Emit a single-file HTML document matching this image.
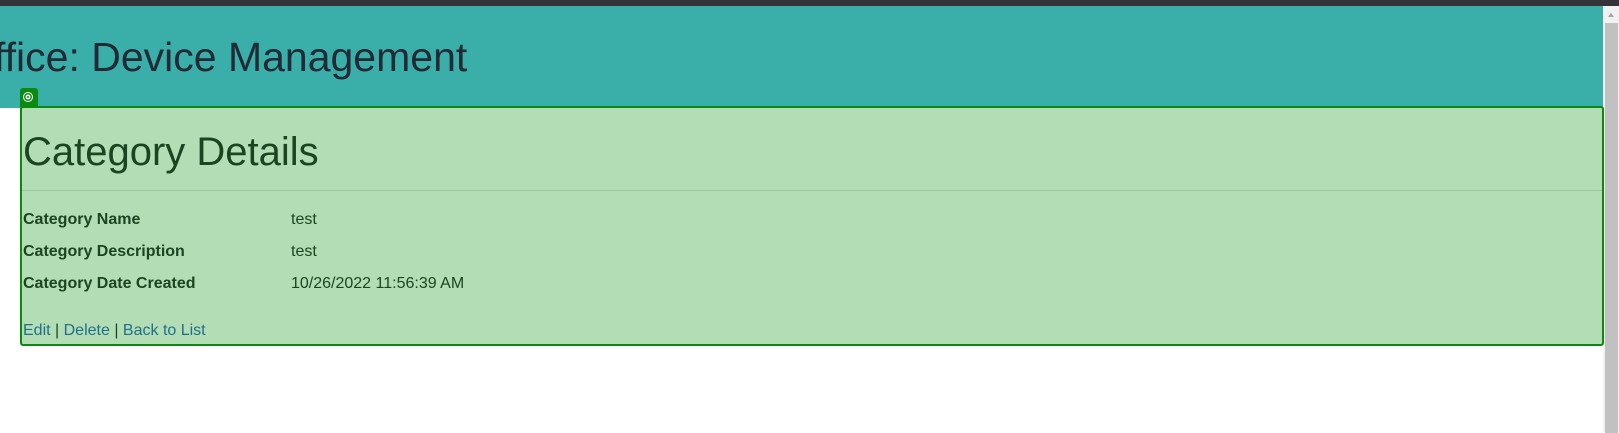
<!DOCTYPE html>
<html><head><style>
body{margin:0;width:1619px;height:432px;overflow:hidden;background:#fff;font-family:"Liberation Sans",sans-serif;position:relative}
.top{position:absolute;left:0;top:0;width:1619px;height:6px;background:#333439}
.hdr{position:absolute;left:0;top:6px;width:1603px;height:102px;background:#3aafa9}
.hdr h1{position:absolute;left:-6px;top:28px;margin:0;font-weight:normal;font-size:41px;color:#212a35;white-space:nowrap}
.box{position:absolute;left:20px;top:106px;width:1580px;height:236px;background:#b3ddb5;border:2px solid #0a8a0f;border-radius:3px}
.ic{position:absolute;left:20px;top:88px;width:18px;height:19px;background:#0a8a0f;border-radius:3px 3px 0 0}
.ic:after{content:"";position:absolute;left:3px;top:4px;width:8px;height:8px;border:1.5px solid #fff;border-radius:50%;box-shadow:inset 0 0 0 1.5px #0a8a0f,inset 0 0 0 3px #fff,inset 0 0 0 4px #0a8a0f}
h2{position:absolute;left:1px;top:22px;margin:0;font-weight:normal;font-size:40px;color:#1c4421}
.hr{position:absolute;left:0;right:0;top:82px;height:1px;background:#9ec7a0}
.r{position:absolute;left:1px;font-size:16px;color:#1c4421;white-space:nowrap}
.r b{display:inline-block;width:268px}
.lk{position:absolute;left:1px;top:214px;font-size:16px;color:#1c4421}
.lk span{color:#1f6f8b}
.sb{position:absolute;left:1603px;top:6px;width:16px;height:426px;background:#f1f1f1}
.sb div{position:absolute;left:2px;top:17px;width:13px;height:410px;background:#c1c1c1}
.sb i{position:absolute;left:5px;top:7px;border:3px solid transparent;border-bottom:4px solid #a3a3a3;border-top:0}
</style></head><body>
<div class="top"></div>
<div class="hdr"><h1>ffice: Device Management</h1></div>
<div class="sb"><i></i><div></div></div>
<div class="box">
<h2>Category Details</h2>
<div class="hr"></div>
<div class="r" style="top:103px"><b>Category Name</b>test</div>
<div class="r" style="top:135px"><b>Category Description</b>test</div>
<div class="r" style="top:167px"><b>Category Date Created</b>10/26/2022 11:56:39 AM</div>
<div class="lk"><span>Edit</span> | <span>Delete</span> | <span>Back to List</span></div>
</div>
<div class="ic"></div>
</body></html>
